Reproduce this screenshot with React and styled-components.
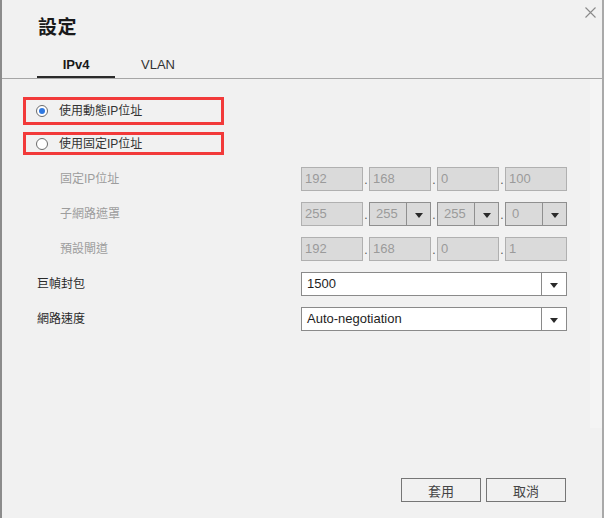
import styled, { createGlobalStyle } from 'styled-components';

const GlobalStyle = createGlobalStyle`
  html, body {
    margin: 0;
    padding: 0;
    background: #f1f1f1;
  }
  body {
    font-family: "Liberation Sans", "Noto Sans CJK TC", Arial, sans-serif;
    font-size: 12px;
    color: #222;
  }
  * { box-sizing: border-box; }
`;

const FONT = `"Liberation Sans", "Noto Sans CJK TC", Arial, sans-serif`;

export default function App() {
  return (
    <>
      <GlobalStyle />
      <Dialog>
        <CloseButton aria-label='close'>
          <svg width='11' height='11' viewBox='0 0 11 11'>
            <path d='M0.5 0.5 L10.5 10.5 M10.5 0.5 L0.5 10.5' stroke='#8a8a8a' strokeWidth='1.1' fill='none' />
          </svg>
        </CloseButton>
        <Title>設定</Title>
        <TabList>
          <Tab $active>IPv4</Tab>
          <Tab $wide>VLAN</Tab>
        </TabList>
        <Body>
          <Content>
            <RadioBox $tall>
              <Radio $checked />
              <RadioLabel>使用動態IP位址</RadioLabel>
            </RadioBox>
            <RadioBox>
              <Radio />
              <RadioLabel>使用固定IP位址</RadioLabel>
            </RadioBox>
            <Rows>
              <Row>
                <Label $sub>固定IP位址</Label>
                <IpGroup>
                  <IpField value='192' />
                  <Dot>.</Dot>
                  <IpField value='168' />
                  <Dot>.</Dot>
                  <IpField value='0' />
                  <Dot>.</Dot>
                  <IpField value='100' />
                </IpGroup>
              </Row>
              <Row>
                <Label $sub>子網路遮罩</Label>
                <IpGroup>
                  <IpField value='255' />
                  <Dot>.</Dot>
                  <IpSelect value='255' />
                  <Dot>.</Dot>
                  <IpSelect value='255' />
                  <Dot>.</Dot>
                  <IpSelect value='0' />
                </IpGroup>
              </Row>
              <Row>
                <Label $sub>預設閘道</Label>
                <IpGroup>
                  <IpField value='192' />
                  <Dot>.</Dot>
                  <IpField value='168' />
                  <Dot>.</Dot>
                  <IpField value='0' />
                  <Dot>.</Dot>
                  <IpField value='1' />
                </IpGroup>
              </Row>
              <Row>
                <Label>巨幀封包</Label>
                <Select>
                  <SelectValue>1500</SelectValue>
                  <ArrowBox><Arrow /></ArrowBox>
                </Select>
              </Row>
              <Row>
                <Label>網路速度</Label>
                <Select>
                  <SelectValue>Auto-negotiation</SelectValue>
                  <ArrowBox><Arrow /></ArrowBox>
                </Select>
              </Row>
            </Rows>
          </Content>
          <ScrollTrack />
        </Body>
        <Footer>
          <Button>套用</Button>
          <Button>取消</Button>
        </Footer>
      </Dialog>
    </>
  );
}

const IpField = ({ value }) => (
  <Field>
    <FieldText>{value}</FieldText>
  </Field>
);

const IpSelect = ({ value }) => (
  <Field $select>
    <FieldText $center>{value}</FieldText>
    <ArrowBox $disabled><Arrow /></ArrowBox>
  </Field>
);

const Dialog = styled.div`
  position: relative;
  width: 604px;
  height: 518px;
  background: #f1f1f1;
  border-left: 2px solid #8c8c8c;
  border-right: 2px solid #a9a9a9;
  display: flex;
  flex-direction: column;
  font-family: ${FONT};
`;

const CloseButton = styled.div`
  position: absolute;
  top: 7px;
  right: 6px;
  width: 11px;
  height: 11px;
  line-height: 0;
  cursor: pointer;
`;

const Title = styled.h1`
  margin: 0;
  padding: 16px 0 0 36px;
  height: 40px;
  font-size: 19px;
  line-height: 24px;
  font-weight: 700;
  color: #1a1a1a;
  letter-spacing: 0.5px;
`;

const TabList = styled.div`
  display: flex;
  margin-top: 14px;
  padding-left: 35px;
  border-bottom: 1px solid #a6a6a6;
`;

const Tab = styled.div`
  width: ${(p) => (p.$wide ? '86px' : '78px')};
  height: 24px;
  line-height: 22px;
  text-align: center;
  font-size: 13px;
  font-weight: ${(p) => (p.$active ? 700 : 400)};
  color: ${(p) => (p.$active ? '#1a1a1a' : '#333')};
  border-bottom: 2px solid ${(p) => (p.$active ? '#2b2b2b' : 'transparent')};
`;

const Body = styled.div`
  flex: 1;
  display: flex;
`;

const Content = styled.div`
  flex: 1;
  padding: 18px 0 0 21px;
  display: flex;
  flex-direction: column;
  gap: 7px;
`;

const ScrollTrack = styled.div`
  width: 12px;
  height: 349px;
  background: #f4f4f4;
`;

const RadioBox = styled.div`
  width: 201px;
  height: ${(p) => (p.$tall ? '28px' : '23px')};
  border: 3px solid #f23a3a;
  display: flex;
  align-items: center;
  padding-left: 10px;
`;

const Radio = styled.span`
  width: 12px;
  height: 12px;
  border-radius: 50%;
  border: 1px solid #6b6b6b;
  background: #fff;
  display: flex;
  align-items: center;
  justify-content: center;
  &::after {
    content: '';
    display: ${(p) => (p.$checked ? 'block' : 'none')};
    width: 6px;
    height: 6px;
    border-radius: 50%;
    background: #2f78e0;
  }
`;

const RadioLabel = styled.span`
  margin-left: 11px;
  font-size: 12px;
  line-height: 16px;
  color: #333;
`;

const Rows = styled.div`
  margin-top: 5px;
  padding-left: 14px;
  display: flex;
  flex-direction: column;
  gap: 11px;
`;

const Row = styled.div`
  display: grid;
  grid-template-columns: 264px 266px;
  align-items: center;
  height: 24px;
`;

const Label = styled.span`
  padding-left: ${(p) => (p.$sub ? '23px' : '0')};
  font-size: 12px;
  line-height: 16px;
  color: ${(p) => (p.$sub ? '#9d9d9d' : '#2a2a2a')};
`;

const IpGroup = styled.div`
  display: flex;
  height: 24px;
`;

const Field = styled.div`
  width: 62px;
  height: 24px;
  border: 1px solid ${(p) => (p.$select ? '#8f8f8f' : '#b0b0b0')};
  background: #dadada;
  display: flex;
`;

const FieldText = styled.span`
  flex: 1;
  padding-left: ${(p) => (p.$center ? '6px' : '3px')};
  font-size: 13px;
  line-height: 22px;
  color: #9a9a9a;
`;

const Dot = styled.span`
  width: 6px;
  font-size: 12px;
  line-height: 26px;
  color: #555;
  text-align: center;
`;

const Select = styled.div`
  width: 266px;
  height: 24px;
  border: 1px solid #8a8a8a;
  background: #fff;
  display: flex;
`;

const SelectValue = styled.span`
  flex: 1;
  padding-left: 5px;
  font-size: 13px;
  line-height: 22px;
  color: #1e1e1e;
`;

const ArrowBox = styled.span`
  width: ${(p) => (p.$disabled ? '24px' : '25px')};
  border-left: 1px solid ${(p) => (p.$disabled ? '#8f8f8f' : '#8a8a8a')};
  display: flex;
  align-items: center;
  justify-content: center;
`;

const Arrow = styled.span`
  width: 0;
  height: 0;
  margin-top: 2px;
  border-left: 4px solid transparent;
  border-right: 4px solid transparent;
  border-top: 5px solid #2a2a2a;
`;

const Footer = styled.div`
  display: flex;
  justify-content: flex-end;
  gap: 5px;
  padding: 0 36px 16px 0;
`;

const Button = styled.button`
  width: 80px;
  height: 24px;
  border: 1px solid #767676;
  background: #f1f1f1;
  font-family: ${FONT};
  font-size: 13px;
  color: #444;
  padding: 0;
  cursor: pointer;
`;
